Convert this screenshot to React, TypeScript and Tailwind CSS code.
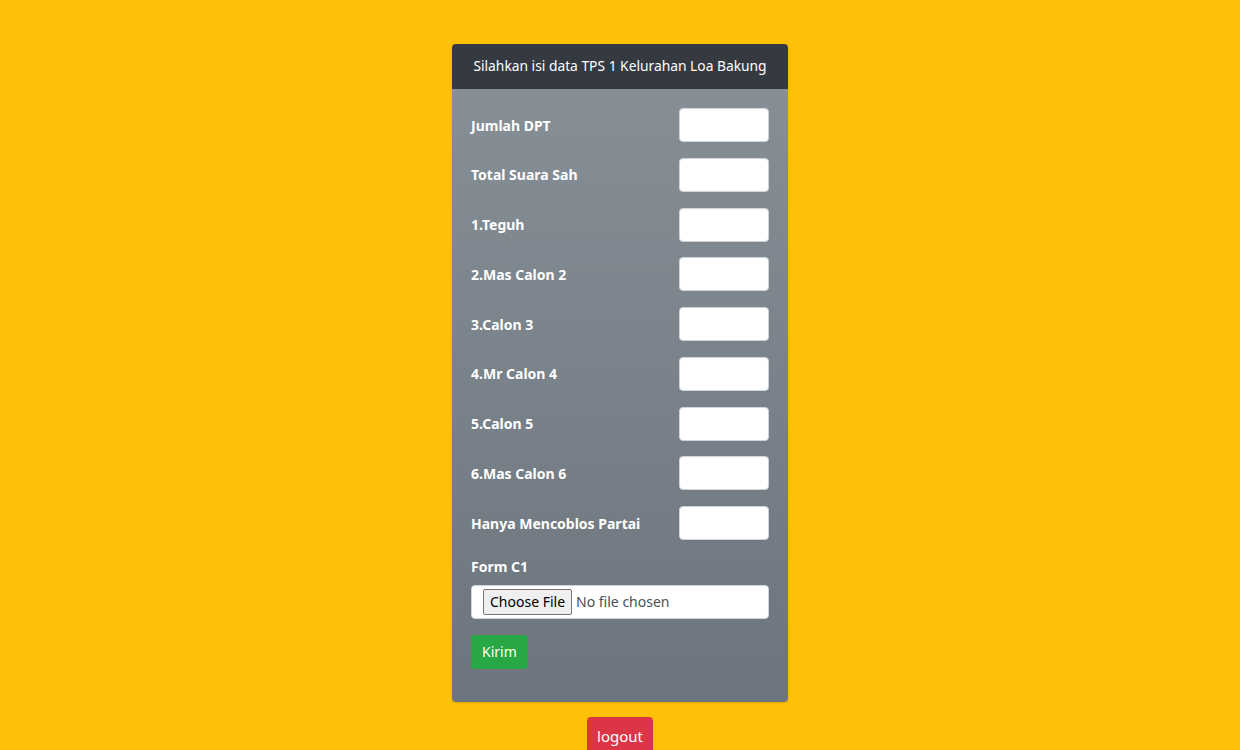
import React from 'react';

const fields = [
  'Jumlah DPT',
  'Total Suara Sah',
  '1.Teguh',
  '2.Mas Calon 2',
  '3.Calon 3',
  '4.Mr Calon 4',
  '5.Calon 5',
  '6.Mas Calon 6',
  'Hanya Mencoblos Partai',
];

export default function App() {
  return (
    <div
      className="min-h-screen w-full bg-[#ffc107] flex flex-col items-center pt-[44px]"
      style={{ fontFamily: '"Noto Sans", "Open Sans", sans-serif' }}
    >
      <div className="w-[336px] rounded-[4px] overflow-hidden shadow-[0_1px_2px_rgba(0,0,0,0.15)]">
        <div className="h-[45px] bg-[#343a40] flex items-center justify-center text-white text-[13.8px]">
          Silahkan isi data TPS 1 Kelurahan Loa Bakung
        </div>
        <div className="bg-gradient-to-b from-[#868e96] to-[#6c757d] px-[19px] pt-[19px] pb-[33px]">
          {fields.map((f) => (
            <div key={f} className="flex items-center justify-between mb-[15.75px] h-[34px]">
              <label className="text-white font-bold text-[14px]">{f}</label>
              <input
                type="text"
                className="w-[90px] h-[34px] bg-white rounded-[4px] border border-[#ced4da] outline-none"
              />
            </div>
          ))}
          <div className="text-white font-bold text-[14px] leading-[22px] mb-[7px]">Form C1</div>
          <div className="h-[34px] bg-white rounded-[4px] border border-[#ced4da] flex items-center pl-[11px] mb-[16px]">
            <span className="h-[26px] px-[6px] flex items-center bg-[#efefef] border border-[#767676] rounded-[2px] text-[14px] text-black">
              Choose File
            </span>
            <span className="ml-[4px] text-[14px] text-[#495057]">No file chosen</span>
          </div>
          <button className="h-[34px] px-[11px] bg-[#28a745] text-white text-[14px] rounded-[4px]">
            Kirim
          </button>
        </div>
      </div>
      <button className="mt-[15px] h-[38px] px-[10px] bg-[#dc3545] text-white text-[15px] rounded-[4px] mb-[10px]">
        logout
      </button>
    </div>
  );
}
